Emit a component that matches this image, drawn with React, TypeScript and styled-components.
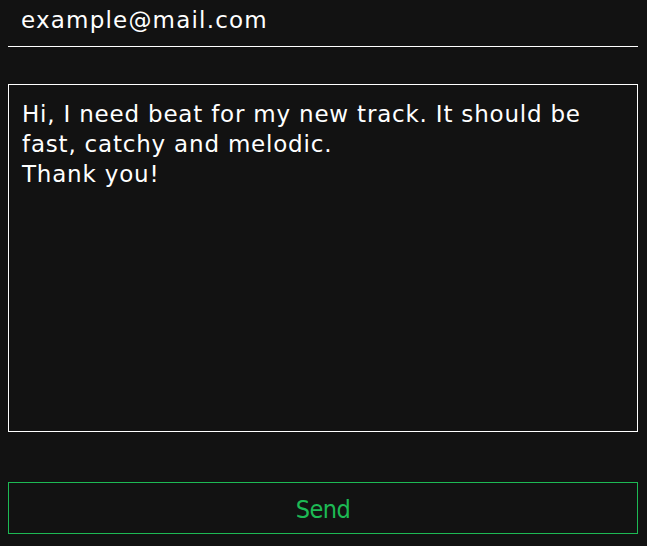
import React, { useEffect, useRef } from "react";
import styled, { createGlobalStyle } from "styled-components";

const Global = createGlobalStyle`
  html, body { background: #121212; }
  body { margin: 8px; font-family: "DejaVu Sans", sans-serif; }
  * { box-sizing: border-box; }
`;

const Form = styled.form`
  width: 630px;
  display: flex;
  flex-direction: column;
`;

const EmailInput = styled.input`
  margin-top: -8px;
  height: 47px;
  background: transparent;
  border: none;
  border-bottom: 1px solid #ffffff;
  color: #ffffff;
  font-family: "DejaVu Sans", sans-serif;
  font-size: 23px;
  letter-spacing: 1.2px;
  padding: 0 13px 7px;
  outline: none;
`;

const Message = styled.textarea`
  margin-top: 37px;
  height: 348px;
  background: transparent;
  border: 1px solid #ffffff;
  color: #ffffff;
  caret-color: #ffffff;
  font-family: "DejaVu Sans", sans-serif;
  font-size: 23px;
  letter-spacing: 0.8px;
  line-height: 30px;
  padding: 14px 13px 12px;
  resize: none;
  outline: none;
`;

const SendButton = styled.button`
  margin-top: 50px;
  height: 52px;
  padding: 2px 0 0;
  background: transparent;
  border: 1px solid #1db954;
  color: #1db954;
  font-family: "DejaVu Sans Condensed", "DejaVu Sans", sans-serif;
  font-stretch: condensed;
  font-size: 25px;
  letter-spacing: -0.6px;
  cursor: pointer;
`;

export default function App() {
  const ref = useRef<HTMLTextAreaElement>(null);
  useEffect(() => {
    const el = ref.current;
    if (el) {
      el.focus();
      el.setSelectionRange(el.value.length, el.value.length);
    }
  }, []);
  return (
    <>
      <Global />
      <Form onSubmit={(e) => e.preventDefault()}>
        <EmailInput defaultValue="example@mail.com" />
        <Message
          ref={ref}
          defaultValue={"Hi, I need beat for my new track. It should be fast, catchy and melodic.\nThank you!"}
        />
        <SendButton type="submit">Send</SendButton>
      </Form>
    </>
  );
}
